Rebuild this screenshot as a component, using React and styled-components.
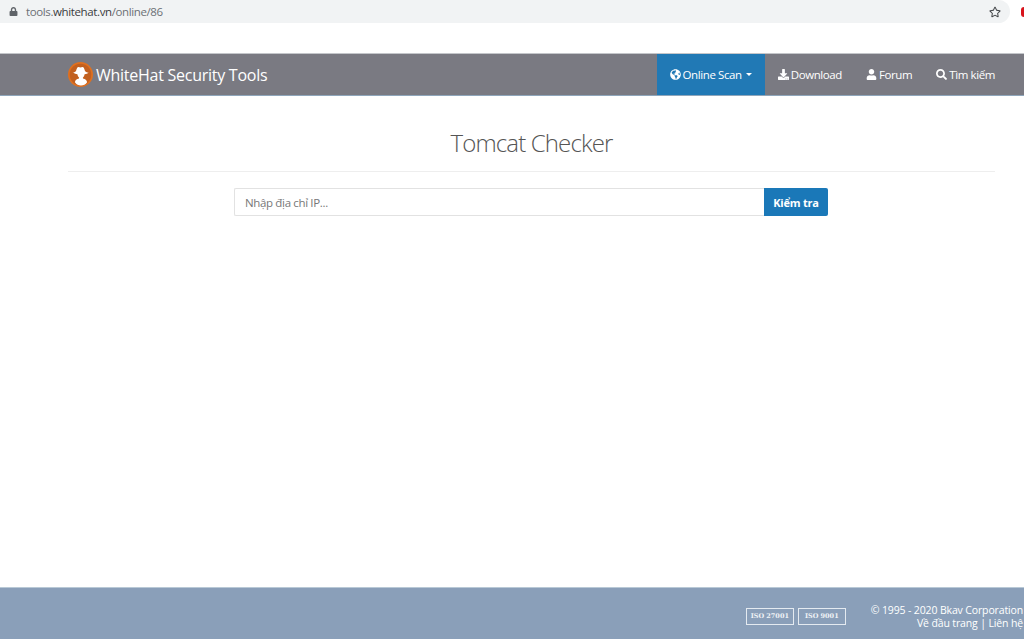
import React from "react";
import styled, { createGlobalStyle } from "styled-components";
import { FaLock, FaRegStar, FaGlobeAmericas, FaDownload, FaUser, FaSearch } from "react-icons/fa";

const GlobalStyle = createGlobalStyle`
    html, body {
        margin: 0;
        padding: 0;
        background: #fff;
        overflow: hidden;
    }
    * {
        box-sizing: border-box;
    }
`

const navItems = [
    { label: "Online Scan", icon: <FaGlobeAmericas />, active: true, caret: true },
    { label: "Download", icon: <FaDownload /> },
    { label: "Forum", icon: <FaUser /> },
    { label: "Tìm kiếm", icon: <FaSearch /> },
];

function Logo() {
    return (
        <svg width="25" height="25" viewBox="0 0 25 25">
            <circle cx="12.5" cy="12.5" r="12.5" fill="#e0701f" />
            <circle cx="12.5" cy="12.5" r="10.8" fill="#c2601f" />
            <path d="M4.4 10.8c2-.3 3.2-.9 3.6-1.7.6-2.5 1.4-4.1 2.5-4.1.8 0 1.3.4 2 .4s1.2-.4 2-.4c1.1 0 1.9 1.6 2.5 4.1.4.8 1.6 1.4 3.6 1.7-1 .9-2.5 1.4-4 1.5-.2 1.6-.9 2.7-1.7 3.3l.1 1c2.4.6 3.7 1.7 4.1 3.6-1.5 2.2-3.7 3.3-6.1 3.3s-4.6-1.1-6.1-3.3c.4-1.9 1.7-3 4.1-3.6l.1-1c-.8-.6-1.5-1.7-1.7-3.3-1.5-.1-3-.6-4-1.5z" fill="#fff" />
        </svg>
    );
}

function App() {
    return (
        <Page>
            <GlobalStyle />
            <BrowserBar>
                <AddressBar>
                    <LockIcon />
                    <Url>tools.<b>whitehat.vn</b>/online/86</Url>
                    <StarIcon />
                </AddressBar>
                <RecordDot />
            </BrowserBar>

            <Navbar>
                <Brand>
                    <Logo />
                    <BrandName>WhiteHat Security Tools</BrandName>
                </Brand>
                <NavList>
                    {navItems.map((item) => (
                        <NavItem key={item.label} $active={item.active}>
                            {item.icon}
                            {item.label}
                            {item.caret && <Caret />}
                        </NavItem>
                    ))}
                </NavList>
            </Navbar>

            <Main>
                <Title>Tomcat Checker</Title>
                <SearchForm>
                    <Input placeholder="Nhập địa chỉ IP..." />
                    <Button>Kiểm tra</Button>
                </SearchForm>
            </Main>

            <Footer>
                <Badges>
                    <Badge>ISO 27001</Badge>
                    <Badge>ISO 9001</Badge>
                </Badges>
                <Copyright>
                    <div>© 1995 - 2020 Bkav Corporation</div>
                    <div>Về đầu trang | Liên hệ</div>
                </Copyright>
            </Footer>
        </Page>
    );
}

const Page = styled.div`
    display: flex;
    flex-direction: column;
    width: 1024px;
    height: 639px;
    overflow: hidden;
    font-family: "Open Sans", "Liberation Sans", sans-serif;
`

const BrowserBar = styled.div`
    display: flex;
    align-items: flex-start;
    height: 53px;
    flex-shrink: 0;
`

const AddressBar = styled.div`
    display: flex;
    align-items: center;
    flex-shrink: 0;
    width: 1010px;
    height: 23px;
    padding: 0 8px 0 9px;
    background-color: #f1f3f4;
    border-radius: 0 12px 12px 0;
`

const LockIcon = styled(FaLock)`
    font-size: 9px;
    color: #5f6368;
`

const Url = styled.span`
    flex: 1;
    margin-left: 8px;
    font-size: 11.5px;
    letter-spacing: -0.38px;
    color: #6c7074;

    b {
        font-weight: 400;
        color: #3a3c3f;
    }
`

const StarIcon = styled(FaRegStar)`
    font-size: 12px;
    color: #44474a;
    margin-right: 1px;
`

const RecordDot = styled.div`
    flex-shrink: 0;
    width: 6px;
    height: 10px;
    margin: 7px 0 0 11px;
    border-radius: 5px;
    background-color: #d8141c;
`

const Navbar = styled.nav`
    display: flex;
    align-items: stretch;
    justify-content: space-between;
    height: 43px;
    flex-shrink: 0;
    padding: 0 17px 0 68px;
    background-color: #7a7a82;
    border-top: 1px solid #c4c6ca;
    border-bottom: 1px solid #8fa6bb;
`

const Brand = styled.div`
    display: flex;
    align-items: center;
`

const BrandName = styled.span`
    margin-left: 3px;
    font-size: 16px;
    letter-spacing: -0.26px;
    color: #fff;
`

const NavList = styled.div`
    display: flex;
    align-items: stretch;
`

const NavItem = styled.div`
    display: flex;
    align-items: center;
    padding: 0 ${(props) => (props.$active ? "13px" : "12px")};
    margin-right: ${(props) => (props.$active ? "1px" : "0")};
    background-color: ${(props) => (props.$active ? "#2179b5" : "transparent")};
    color: #fff;
    font-size: 11.5px;
    letter-spacing: -0.4px;

    svg {
        font-size: 11px;
        margin-right: 2px;
    }
`

const Caret = styled.span`
    width: 0;
    height: 0;
    margin-left: 4px;
    border-top: 3.5px solid #fff;
    border-left: 3.5px solid transparent;
    border-right: 3.5px solid transparent;
`

const Main = styled.main`
    flex: 1;
    padding: 0 29px 0 68px;
`

const Title = styled.h1`
    margin: 0;
    padding: 30px 0 12px;
    height: 76px;
    border-bottom: 1px solid #eeeeee;
    text-align: center;
    font-size: 24px;
    line-height: 33px;
    font-weight: 300;
    letter-spacing: -0.85px;
    color: #555;
`

const SearchForm = styled.div`
    display: flex;
    width: 594px;
    margin: 16px 0 0 166px;
`

const Input = styled.input`
    flex: 1;
    height: 28px;
    padding: 0 10px;
    border: 1px solid #e2e2e2;
    border-right: none;
    border-radius: 2px 0 0 2px;
    outline: none;
    font-family: inherit;
    font-size: 11.5px;
    letter-spacing: -0.35px;
    color: #555;

    &::placeholder {
        color: #777;
        opacity: 1;
    }
`

const Button = styled.button`
    width: 64px;
    height: 28px;
    padding: 0;
    border: none;
    border-radius: 0 2px 2px 0;
    background-color: #1a78b8;
    color: #fff;
    font-family: inherit;
    font-size: 11px;
    font-weight: 700;
    letter-spacing: -0.2px;
`

const Footer = styled.footer`
    display: flex;
    align-items: center;
    justify-content: flex-end;
    height: 52px;
    flex-shrink: 0;
    padding: 6px 1px 0 0;
    background-color: #8a9fb9;
    border-top: 1px solid #b9c9d6;
`

const Badges = styled.div`
    display: flex;
    gap: 4px;
    margin-right: 25px;
`

const Badge = styled.div`
    width: 48px;
    height: 17px;
    border: 1px solid #e4eaf0;
    text-align: center;
    font-family: "DejaVu Serif", serif;
    font-size: 6.5px;
    font-weight: 700;
    line-height: 15px;
    color: #f0f3f6;
`

const Copyright = styled.div`
    text-align: right;
    font-size: 10.5px;
    letter-spacing: -0.14px;
    line-height: 12.5px;
    color: #fff;
`

export default App;
